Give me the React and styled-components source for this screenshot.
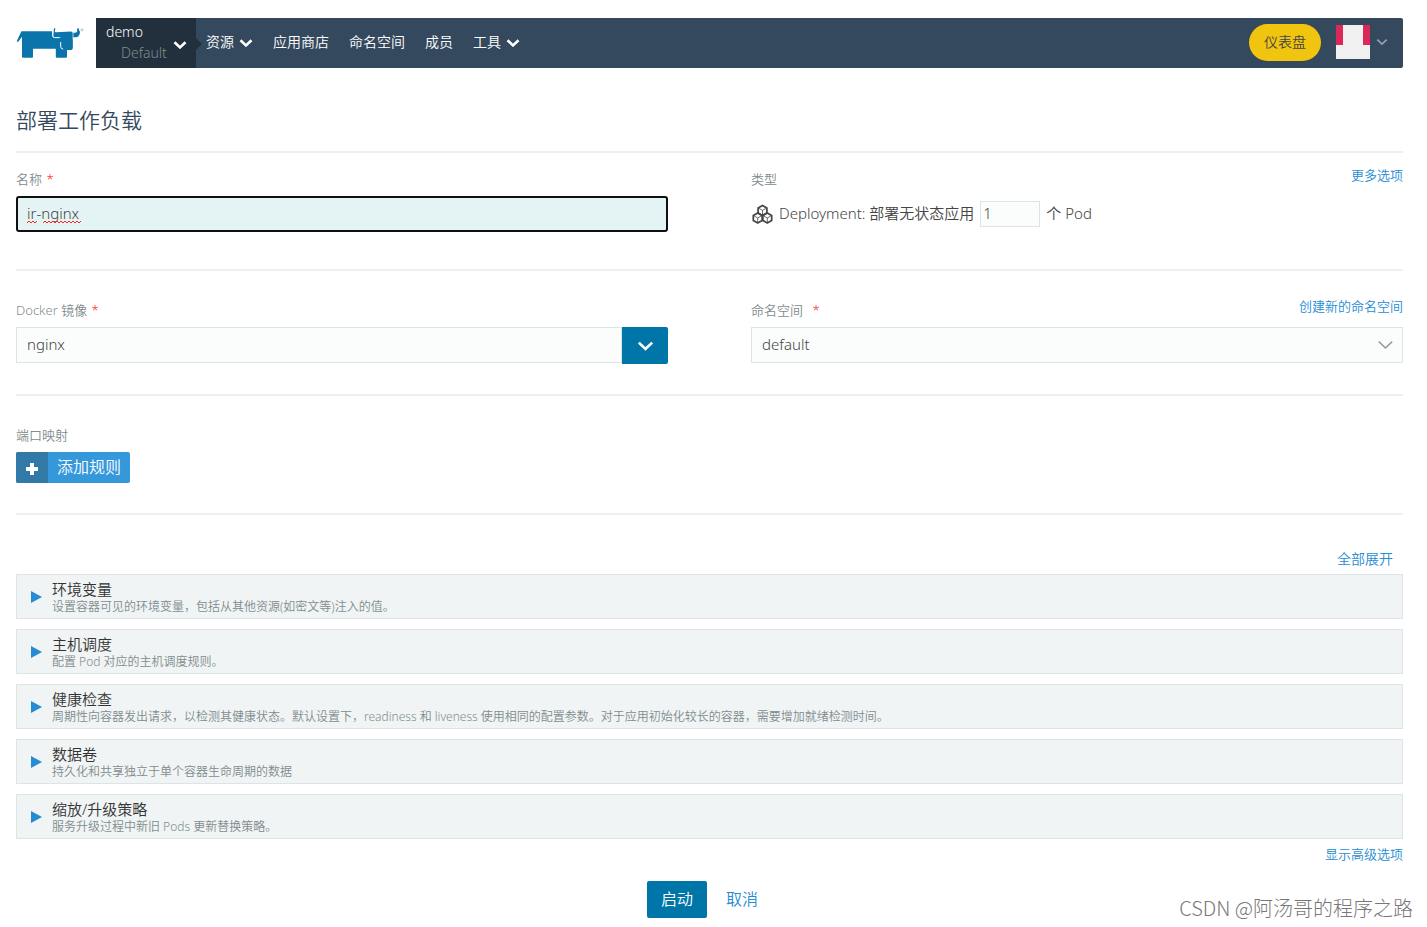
import React, { useState } from "react";
import styled, { createGlobalStyle } from "styled-components";

const navItems = [
    { label: "资源", hasMenu: true },
    { label: "应用商店" },
    { label: "命名空间" },
    { label: "成员" },
    { label: "工具", hasMenu: true },
];

const panels = [
    {
        title: "环境变量",
        detail: "设置容器可见的环境变量，包括从其他资源(如密文等)注入的值。",
    },
    { title: "主机调度", detail: "配置 Pod 对应的主机调度规则。" },
    {
        title: "健康检查",
        detail: "周期性向容器发出请求，以检测其健康状态。默认设置下，readiness 和 liveness 使用相同的配置参数。对于应用初始化较长的容器，需要增加就绪检测时间。",
    },
    { title: "数据卷", detail: "持久化和共享独立于单个容器生命周期的数据" },
    { title: "缩放/升级策略", detail: "服务升级过程中新旧 Pods 更新替换策略。" },
];

const GlobalStyle = createGlobalStyle`
    * {
        box-sizing: border-box;
    }
    body {
        margin: 0;
        background-color: #fff;
        color: #444;
        font-family: "Noto Sans", "Noto Sans CJK SC", sans-serif;
        font-size: 15px;
        font-weight: 350;
    }
    button, input, select {
        margin: 0;
        padding: 0;
        border: 0;
        color: inherit;
        font: inherit;
    }
    button {
        background: none;
        cursor: pointer;
    }
    svg {
        flex-shrink: 0;
    }
`;

const Page = styled.div`
    position: relative;
    padding: 18px 24px 9px 16px;
`;

const Header = styled.header`
    display: flex;
    height: 50px;
`;

const LogoLink = styled.a`
    width: 80px;
    padding-top: 10px;
`;

const NavBar = styled.nav`
    flex: 1;
    display: flex;
    align-items: center;
    padding: 0 15px 2px 0;
    border-radius: 2px;
    background-color: #34495e;
    color: white;
    font-size: 14px;
`;

const Project = styled.button`
    position: relative;
    display: flex;
    align-items: center;
    align-self: flex-start;
    justify-content: space-between;
    width: 100px;
    height: 50px;
    padding: 0 9px 0 10px;
    background-color: #22303d;
    text-align: left;

    svg {
        margin-top: 3px;
    }

    &::after {
        content: "";
        position: absolute;
        left: 100%;
        top: 20px;
        border: 6px solid transparent;
        border-left-color: #22303d;
        border-right: 0;
    }
`;

const ProjectName = styled.span`
    padding-bottom: 2px;
    line-height: 21px;
`;

const ProjectScope = styled.span`
    display: block;
    padding-left: 15px;
    color: #7f8c8d;
    font-weight: 300;
`;

const NavLink = styled.a`
    display: flex;
    align-items: center;
    gap: 5px;
    padding: 0 10px 3px;
    color: white;
    text-decoration: none;

    svg {
        margin-top: 4px;
    }
`;

const Dashboard = styled.button`
    width: 72px;
    height: 37px;
    margin-left: auto;
    padding-bottom: 3px;
    border-radius: 19px;
    background-color: #f1c40f;
    color: #444;
`;

const User = styled.button`
    display: flex;
    align-items: center;
    gap: 6px;
    margin-left: 15px;
    color: #95a0ab;
`;

const Title = styled.h1`
    margin: 37px 0 0;
    padding-bottom: 16px;
    border-bottom: 2px solid #ecf0f1;
    color: #34495e;
    font-size: 21px;
    font-weight: 350;
    line-height: 30px;
`;

const Section = styled.section`
    display: grid;
    grid-template-columns: 1fr 1fr;
    column-gap: 83px;
    padding: ${(props) => (props.$first ? "16px 0 37px" : "29px 0 30px")};
    border-bottom: 2px solid #ecf0f1;
`;

const LabelRow = styled.div`
    display: flex;
    justify-content: space-between;
    align-items: flex-start;
    margin-bottom: 7px;
    color: #7f8c8d;
    font-size: 13px;
    line-height: 20px;
`;

const Required = styled.span`
    margin-left: ${(props) => (props.$spaced ? "6px" : "1px")};
    color: #f22;
`;

const Link = styled.a`
    color: #268bd2;
    text-decoration: none;
`;

const CornerLink = styled(Link)`
    line-height: 12px;
`;

const NameField = styled.div`
    position: relative;

    svg {
        position: absolute;
        left: 11px;
        top: 24px;
    }
`;

const Input = styled.input`
    display: block;
    width: 100%;
    height: 36px;
    padding: 0 10px 2px;
    border: 1px solid #dce4e6;
    background-color: #fbfdfc;
    outline: 0;
`;

const NameInput = styled(Input)`
    padding: 0 9px 2px;
    border: 2px solid #101010;
    border-radius: 3px;
    background-color: #e4f4f4;
`;

const Workload = styled.div`
    display: flex;
    align-items: center;
    gap: 6px;
    height: 36px;
    padding-left: 1px;

    label, span {
        padding-bottom: 3px;
    }
`;

const ScaleInput = styled.input`
    width: 60px;
    height: 26px;
    padding: 0 2px 2px;
    border: 1px solid #dce4e6;
    background-color: #fbfdfc;
`;

const Combo = styled.div`
    display: flex;
`;

const ComboButton = styled.button`
    display: flex;
    align-items: center;
    justify-content: center;
    flex-shrink: 0;
    width: 46px;
    height: 37px;
    border-radius: 0 2px 2px 0;
    background-color: #0075a8;
    color: white;
`;

const SelectBox = styled.div`
    position: relative;

    svg {
        position: absolute;
        right: 9px;
        top: 13px;
        color: #999;
        pointer-events: none;
    }
`;

const Select = styled.select`
    appearance: none;
    display: block;
    width: 100%;
    height: 36px;
    padding: 0 10px 2px;
    border: 1px solid #dce4e6;
    background-color: #fbfdfc;
`;

const AddButton = styled.button`
    display: flex;
    height: 31px;
    border-radius: 2px;
    overflow: hidden;
    background-color: #3498db;
    color: white;
    font-size: 16px;
    line-height: 30px;
`;

const AddIcon = styled.span`
    display: flex;
    align-items: center;
    justify-content: center;
    width: 32px;
    height: 31px;
    padding-top: 3px;
    background-color: #3279a8;
`;

const AddText = styled.span`
    padding: 0 9px;
`;

const ExpandRow = styled.div`
    margin: 34px 0 5px;
    padding-right: 10px;
    font-size: 14px;
    line-height: 20px;
    text-align: right;
`;

const PanelList = styled.div`
    display: flex;
    flex-direction: column;
    gap: 10px;
`;

const Panel = styled.button`
    display: flex;
    align-items: center;
    gap: 9px;
    height: 45px;
    padding: 0 14px;
    border: 1px solid #dce4e6;
    background-color: #f0f4f5;
    text-align: left;
`;

const PanelText = styled.span`
    padding-top: 1px;
    color: #333;
    line-height: 18px;
`;

const PanelDetail = styled.small`
    display: block;
    margin-top: 1px;
    color: #7f8c8d;
    font-size: 12px;
    line-height: 16px;
`;

const AdvancedRow = styled.div`
    margin: 5px 0 17px;
    font-size: 13px;
    line-height: 20px;
    text-align: right;
`;

const Footer = styled.footer`
    display: flex;
    justify-content: center;
    gap: 5px;
`;

const FooterButton = styled.button`
    height: 37px;
    padding: 0 14px 3px;
    border-radius: 2px;
    background-color: ${(props) => (props.$primary ? "#0075a8" : "transparent")};
    color: ${(props) => (props.$primary ? "white" : "#268bd2")};
    font-size: 16px;
`;

const Watermark = styled.div`
    position: absolute;
    right: 14px;
    bottom: 5px;
    color: #777;
    font-family: "Noto Sans CJK SC", sans-serif;
    font-size: 20px;
    font-weight: 300;
    line-height: 28px;
`;

const Chevron = ({ width = 14, height = 8, stroke = 2.6 }) => (
    <svg width={width} height={height} viewBox="0 0 14 8" aria-hidden="true">
        <path
            d="M1.5 1.2 L7 6.4 L12.5 1.2"
            fill="none"
            stroke="currentColor"
            strokeWidth={stroke}
        />
    </svg>
);

const Logo = () => (
    <svg width="68" height="32" viewBox="0 0 68 32" aria-hidden="true">
        <g fill="#0b75ab">
            <path d="M5.4 3.2H36.5V8.6L38.5 10H54.5L56.5 12V20.5Q56.5 22 55 22H51V28.7Q51 29.7 50 29.7H40.8Q39.8 29.7 39.8 28.7V20.8H17V28.7Q17 29.7 16 29.7H7Q6 29.7 6 28.7V8.8L2 14L0.7 13.2Z" />
            <path d="M38 0.3L39.4 0.5L38.8 3.6Q39 4.4 40 4.3L55 3.4Q56.7 3.5 56.7 5V19.5Q56.7 21.3 55 21.3H48L45 18.5V9.8L38.3 9.6Q37 9.3 37.2 7.8Z" />
            <path d="M57.3 4.8Q61 5 61.2 3V0.6L62.8 0.3L63.2 2.6Q64.5 3.4 63.8 5.5Q63 9.2 60 9.3H57.3Z" />
        </g>
        <path
            d="M36.7 2.5V7.5Q36.8 9.3 38.3 9.6H43.5M44.7 14V18.7Q44.9 21 47.2 21.1"
            fill="none"
            stroke="#fff"
            strokeWidth="1"
        />
        <circle cx="66" cy="1.8" r="1" fill="none" stroke="#7fb5d2" strokeWidth="0.7" />
    </svg>
);

const cubes = [
    [10, 6.4],
    [5.2, 14],
    [14.8, 14],
];

const PodIcon = () => (
    <svg width="21" height="20" viewBox="0 0 20 20" aria-hidden="true">
        {cubes.map(([x, y]) => (
            <g
                key={x}
                transform={`translate(${x} ${y})`}
                fill="none"
                stroke="#444"
                strokeLinejoin="round"
            >
                <path d="M0 -5L4.4 -2.5V2.5L0 5L-4.4 2.5V-2.5Z" strokeWidth="1.7" />
                <path d="M-4 -2.3L0 0L4 -2.3M0 0V5" strokeWidth="0.8" />
            </g>
        ))}
    </svg>
);

const App = () => {
    const [name, setName] = useState("ir-nginx");
    const [image, setImage] = useState("nginx");
    const [scale, setScale] = useState("1");
    return (
        <React.Fragment>
            <GlobalStyle />
            <Page>
                <Header>
                    <LogoLink href="#" aria-label="Rancher">
                        <Logo />
                    </LogoLink>
                    <NavBar>
                        <Project type="button">
                            <ProjectName>
                                demo
                                <ProjectScope>Default</ProjectScope>
                            </ProjectName>
                            <Chevron />
                        </Project>
                        {navItems.map((item) => (
                            <NavLink href="#" key={item.label}>
                                {item.label}
                                {item.hasMenu && <Chevron />}
                            </NavLink>
                        ))}
                        <Dashboard type="button">仪表盘</Dashboard>
                        <User type="button" aria-label="user">
                            <svg width="34" height="34" aria-hidden="true">
                                <rect width="34" height="34" fill="#f0f0f0" />
                                <path d="M0 0H7V20H0ZM27 0H34V20H27Z" fill="#da2858" />
                            </svg>
                            <Chevron width={12} stroke={2} />
                        </User>
                    </NavBar>
                </Header>

                <main>
                    <Title>部署工作负载</Title>

                    <Section $first>
                        <div>
                            <LabelRow>
                                <label htmlFor="name">
                                    名称 <Required>*</Required>
                                </label>
                            </LabelRow>
                            <NameField>
                                <NameInput
                                    id="name"
                                    value={name}
                                    onChange={(e) => setName(e.target.value)}
                                />
                                <svg width="56" height="4" aria-hidden="true">
                                    <path
                                        d="M0 3L2 1L4 3L6 1L8 3L10 1M16 3L18 1L20 3L22 1L24 3L26 1L28 3L30 1L32 3L34 1L36 3L38 1L40 3L42 1L44 3L46 1L48 3L50 1L52 3L54 1"
                                        fill="none"
                                        stroke="#f22"
                                    />
                                </svg>
                            </NameField>
                        </div>
                        <div>
                            <LabelRow>
                                <span>类型</span>
                                <CornerLink href="#">更多选项</CornerLink>
                            </LabelRow>
                            <Workload>
                                <PodIcon />
                                <label htmlFor="scale">Deployment: 部署无状态应用</label>
                                <ScaleInput
                                    id="scale"
                                    value={scale}
                                    onChange={(e) => setScale(e.target.value)}
                                />
                                <span>个 Pod</span>
                            </Workload>
                        </div>
                    </Section>

                    <Section>
                        <div>
                            <LabelRow>
                                <label htmlFor="image">
                                    Docker 镜像 <Required>*</Required>
                                </label>
                            </LabelRow>
                            <Combo>
                                <Input
                                    id="image"
                                    value={image}
                                    onChange={(e) => setImage(e.target.value)}
                                />
                                <ComboButton type="button" aria-label="选择镜像">
                                    <Chevron width={17} height={10} stroke={2.2} />
                                </ComboButton>
                            </Combo>
                        </div>
                        <div>
                            <LabelRow>
                                <label htmlFor="namespace">
                                    命名空间 <Required $spaced>*</Required>
                                </label>
                                <CornerLink href="#">创建新的命名空间</CornerLink>
                            </LabelRow>
                            <SelectBox>
                                <Select id="namespace" defaultValue="default">
                                    <option value="default">default</option>
                                </Select>
                                <Chevron width={17} height={10} stroke={1.2} />
                            </SelectBox>
                        </div>
                    </Section>

                    <Section>
                        <div>
                            <LabelRow>
                                <span>端口映射</span>
                            </LabelRow>
                            <AddButton type="button">
                                <AddIcon>
                                    <svg width="12" height="12" aria-hidden="true">
                                        <path d="M6 0V12M0 6H12" stroke="#fff" strokeWidth="4" />
                                    </svg>
                                </AddIcon>
                                <AddText>添加规则</AddText>
                            </AddButton>
                        </div>
                    </Section>

                    <ExpandRow>
                        <Link href="#">全部展开</Link>
                    </ExpandRow>
                    <PanelList>
                        {panels.map((panel) => (
                            <Panel type="button" key={panel.title}>
                                <svg width="12" height="12" aria-hidden="true">
                                    <path d="M0 0L11 6L0 12Z" fill="#268bd2" />
                                </svg>
                                <PanelText>
                                    {panel.title}
                                    <PanelDetail>{panel.detail}</PanelDetail>
                                </PanelText>
                            </Panel>
                        ))}
                    </PanelList>
                    <AdvancedRow>
                        <Link href="#">显示高级选项</Link>
                    </AdvancedRow>

                    <Footer>
                        <FooterButton type="button" $primary>
                            启动
                        </FooterButton>
                        <FooterButton type="button">取消</FooterButton>
                    </Footer>
                </main>
                <Watermark>CSDN @阿汤哥的程序之路</Watermark>
            </Page>
        </React.Fragment>
    );
};

export default App;
